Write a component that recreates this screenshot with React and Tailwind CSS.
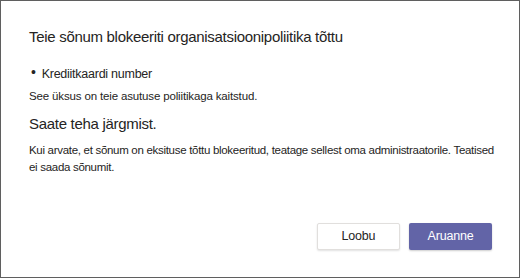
// Teams DLP dialog: blocked message notice with cancel / report actions.
const App = () => (
  <div className="w-[520px] h-[278px] bg-white border border-[#5f5f5f] flex flex-col text-[#252423] font-['Segoe_UI','Liberation_Sans',Arial,sans-serif]">
    <div className="pl-[28px] pr-[20px] pt-[26px] flex-1">
      <h1 className="text-[15px] leading-[20px] tracking-[-0.3px]">Teie sõnum blokeeriti organisatsioonipoliitika tõttu</h1>

      <ul className="mt-[19px] text-[12.5px] leading-[16px] tracking-[-0.25px]">
        <li className="flex items-center gap-[6px] pl-[2px]">
          <span className="text-[14px] leading-none -mt-[4px]">•</span>
          <span>Krediitkaardi number</span>
        </li>
      </ul>
      <p className="mt-[6px] text-[11.5px] leading-[16px] tracking-[-0.15px]">See üksus on teie asutuse poliitikaga kaitstud.</p>

      <h2 className="mt-[10px] text-[15px] leading-[20px] tracking-[-0.3px]">Saate teha järgmist.</h2>
      <p className="mt-[8px] text-[11.5px] leading-[17px] tracking-[-0.3px]">
        Kui arvate, et sõnum on eksituse tõttu blokeeritud, teatage sellest oma administraatorile. Teatised ei saada sõnumit.
      </p>
    </div>

    <div className="flex justify-end gap-[9px] pr-[27px] pb-[27px]">
      <button className="w-[83px] h-[27px] bg-white border border-[#e1dfdd] rounded-[2px] shadow-[0_1px_2px_rgba(0,0,0,0.12)] text-[12.5px] tracking-[-0.2px]">
        Loobu
      </button>
      <button className="w-[83px] h-[27px] bg-[#6264a7] text-white rounded-[2px] shadow-[0_1px_2px_rgba(0,0,0,0.2)] text-[12.5px] tracking-[-0.2px]">
        Aruanne
      </button>
    </div>
  </div>
);

export default App;
